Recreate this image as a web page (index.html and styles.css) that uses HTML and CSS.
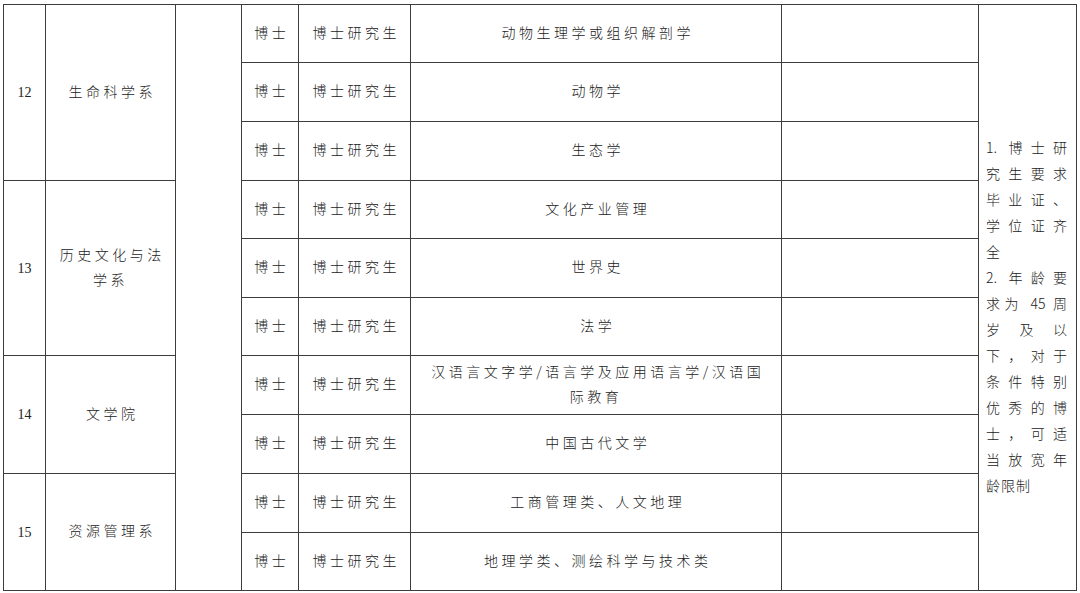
FILE: index.html
```html
<!DOCTYPE html>
<html lang="zh">
<head>
<meta charset="utf-8">
<link rel="stylesheet" href="styles.css">
</head>
<body>
<table class="grid">
  <colgroup>
    <col class="c-no"><col class="c-dept"><col class="c-empty"><col class="c-deg"><col class="c-type"><col class="c-major"><col class="c-blank"><col class="c-note">
  </colgroup>
  <tr class="r58">
    <td class="num" rowspan="3">12</td>
    <td class="dept" rowspan="3">生命科学系</td>
    <td rowspan="10"></td>
    <td class="cn">博士</td>
    <td class="cn">博士研究生</td>
    <td class="cn">动物生理学或组织解剖学</td>
    <td></td>
    <td class="note" rowspan="10">
      <span class="jl">1. 博士研</span>
      <span class="jl">究生要求</span>
      <span class="jl">毕业证、</span>
      <span class="jl">学位证齐</span>
      <span class="ll">全</span>
      <span class="jl">2. 年龄要</span>
      <span class="jl">求为 45 周</span>
      <span class="jl">岁及以</span>
      <span class="jl">下，对于</span>
      <span class="jl">条件特别</span>
      <span class="jl">优秀的博</span>
      <span class="jl">士，可适</span>
      <span class="jl">当放宽年</span>
      <span class="ll last">龄限制</span>
    </td>
  </tr>
  <tr class="r59">
    <td class="cn">博士</td>
    <td class="cn">博士研究生</td>
    <td class="cn">动物学</td>
    <td></td>
  </tr>
  <tr class="r59">
    <td class="cn">博士</td>
    <td class="cn">博士研究生</td>
    <td class="cn">生态学</td>
    <td></td>
  </tr>
  <tr class="r58">
    <td class="num" rowspan="3">13</td>
    <td class="dept" rowspan="3">历史文化与法<br>学系</td>
    <td class="cn">博士</td>
    <td class="cn">博士研究生</td>
    <td class="cn">文化产业管理</td>
    <td></td>
  </tr>
  <tr class="r59">
    <td class="cn">博士</td>
    <td class="cn">博士研究生</td>
    <td class="cn">世界史</td>
    <td></td>
  </tr>
  <tr class="r58">
    <td class="cn">博士</td>
    <td class="cn">博士研究生</td>
    <td class="cn">法学</td>
    <td></td>
  </tr>
  <tr class="r59">
    <td class="num" rowspan="2">14</td>
    <td class="dept" rowspan="2">文学院</td>
    <td class="cn">博士</td>
    <td class="cn">博士研究生</td>
    <td class="cn two">汉语言文字学/语言学及应用语言学/汉语国<br>际教育</td>
    <td></td>
  </tr>
  <tr class="r59">
    <td class="cn">博士</td>
    <td class="cn">博士研究生</td>
    <td class="cn">中国古代文学</td>
    <td></td>
  </tr>
  <tr class="r59">
    <td class="num" rowspan="2">15</td>
    <td class="dept" rowspan="2">资源管理系</td>
    <td class="cn">博士</td>
    <td class="cn">博士研究生</td>
    <td class="cn">工商管理类、人文地理</td>
    <td></td>
  </tr>
  <tr class="r58">
    <td class="cn">博士</td>
    <td class="cn">博士研究生</td>
    <td class="cn">地理学类、测绘科学与技术类</td>
    <td></td>
  </tr>
</table>
</body>
</html>
```

FILE: styles.css
```css
html, body {
  margin: 0;
  padding: 0;
  background: #ffffff;
}

body {
  padding: 4px 0 0 3px;
  font-family: "Noto Sans CJK SC", "Noto Sans", sans-serif;
  font-weight: 300;
  color: #222;
  font-size: 14px;
}

.grid {
  border-collapse: collapse;
  table-layout: fixed;
  width: 1074px;
}

.grid td {
  border: 1px solid #3c3c3c;
  padding: 0;
  text-align: center;
  vertical-align: middle;
  line-height: 25px;
}

.c-no { width: 42px; }
.c-dept { width: 130px; }
.c-empty { width: 66px; }
.c-deg { width: 57px; }
.c-type { width: 112px; }
.c-major { width: 371px; }
.c-blank { width: 197px; }
.c-note { width: 98px; }

.r58 { height: 58px; }
.r59 { height: 59px; }

.num {
  font-family: "Liberation Serif", serif;
  font-size: 14px;
  font-weight: 400;
}

.grid td.cn,
.grid td.dept {
  letter-spacing: 3.5px;
  text-indent: 3.5px;
  padding-bottom: 3px;
}

.grid td.note {
  vertical-align: top;
  text-align: left;
  padding: 129px 9px 0 7px;
  line-height: 26px;
  font-size: 14px;
}

.jl {
  display: block;
  text-align: justify;
  text-align-last: justify;
}

.ll {
  display: block;
  text-align: left;
}

.last {
  letter-spacing: 1px;
}
```
